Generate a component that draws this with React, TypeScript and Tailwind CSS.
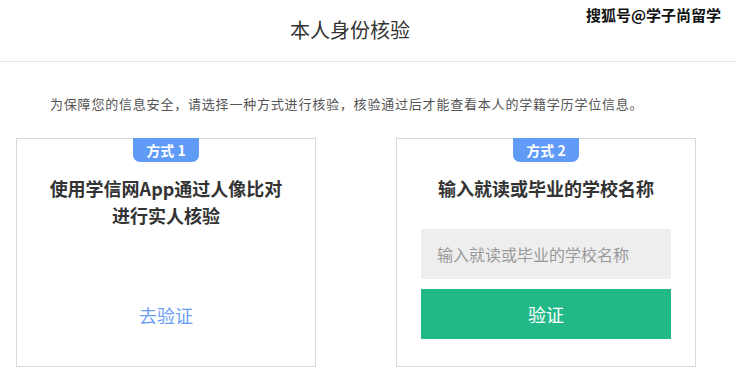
const font = "font-['Noto_Sans_CJK_SC','Noto_Sans',sans-serif]";

function Badge({ label }: { label: string }) {
  return (
    <div className="flex justify-center">
      <div className="-mt-px flex h-[24px] w-[66px] items-center justify-center rounded-b-[7px] bg-[#5f9bf7] text-[14px] font-bold leading-none text-white">
        {label}
      </div>
    </div>
  );
}

export default function App() {
  return (
    <div className={`relative h-[390px] w-[736px] overflow-hidden bg-white ${font}`}>
      <header className="flex h-[62px] items-center justify-center border-b border-[#e6e6e6] pr-[36px]">
        <h1 className="pb-[2px] text-[20px] font-normal text-[#333]">本人身份核验</h1>
      </header>

      <span className="absolute right-[15px] top-[4px] text-[15px] font-bold text-[#111] [text-shadow:0_0_2px_#fff]">
        搜狐号@学子尚留学
      </span>

      <p className="pl-[50px] pt-[32px] text-[13px] leading-[20px] tracking-[0.8px] text-[#555]">
        为保障您的信息安全，请选择一种方式进行核验，核验通过后才能查看本人的学籍学历学位信息。
      </p>

      <div className="mt-[24px] flex gap-[80px] pl-[16px]">
        <section className="flex h-[229px] w-[300px] flex-col border border-[#d9d9d9]">
          <Badge label="方式 1" />
          <h2 className="mt-[13px] text-center text-[18px] font-bold leading-[27px] text-[#333]">
            使用学信网App通过人像比对
            <br />
            进行实人核验
          </h2>
          <a className="mt-auto mb-[37px] cursor-pointer text-center text-[18px] text-[#6b9ef6]">去验证</a>
        </section>

        <section className="flex h-[229px] w-[300px] flex-col items-center border border-[#d9d9d9]">
          <Badge label="方式 2" />
          <h2 className="mt-[13px] text-center text-[18px] font-bold leading-[27px] text-[#333]">
            输入就读或毕业的学校名称
          </h2>
          <input
            className="mt-[27px] h-[50px] w-[250px] bg-[#eeeeee] pl-[16px] text-[16px] text-[#333] outline-none placeholder:text-[#999]"
            placeholder="输入就读或毕业的学校名称"
          />
          <button className="mt-[10px] h-[50px] w-[250px] bg-[#23b887] text-[18px] text-white">验证</button>
        </section>
      </div>
    </div>
  );
}
